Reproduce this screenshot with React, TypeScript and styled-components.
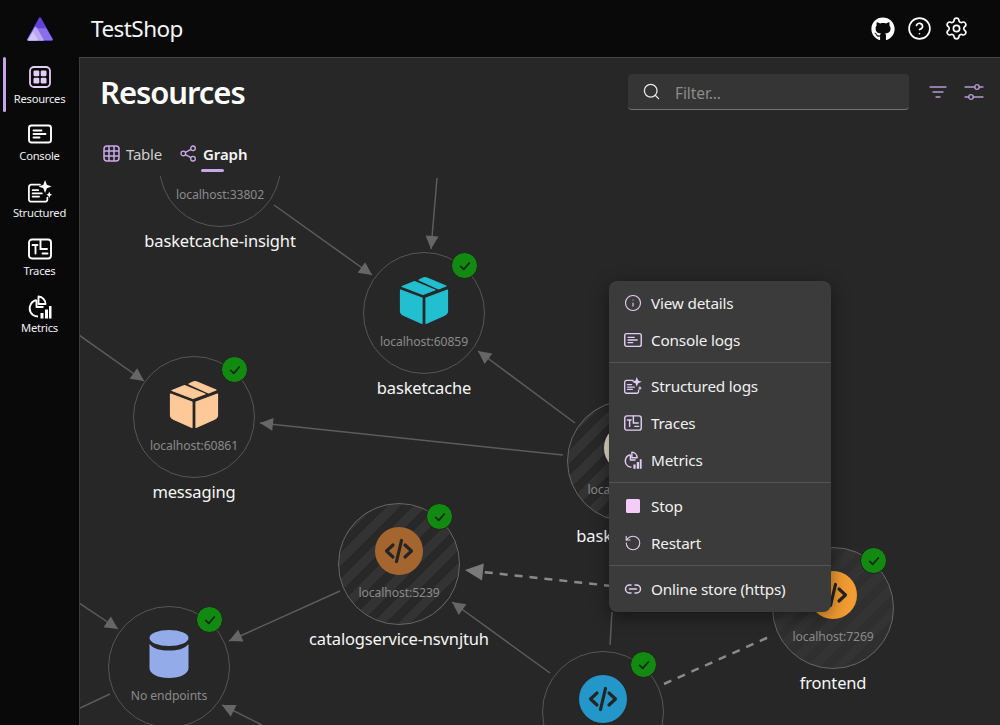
import React from "react";
import styled, { createGlobalStyle } from "styled-components";
import { FaGithub } from "react-icons/fa";
import { CircleHelp, Settings, Search, Info, RotateCcw } from "lucide-react";

const Global = createGlobalStyle`
  html, body { margin: 0; padding: 0; height: 100%; background: #090909; }
  #root { height: 100%; }
  * { box-sizing: border-box; }
  body { font-family: "Noto Sans", "Open Sans", sans-serif; color: #fff; }
`;

const Shell = styled.div`
  width: 1000px; height: 725px; overflow: hidden;
  display: grid; grid-template-columns: 79px 1fr; grid-template-rows: 57px 1fr;
  background: #090909;
`;
const TopBar = styled.header`
  grid-column: 1 / 3; display: flex; align-items: center;
  padding: 0 31px 0 26px;
`;
const AppName = styled.div`
  margin-left: 37px; font-size: 22.5px; letter-spacing: -0.55px; color: #f6f6f6; flex: 1; line-height: 30px;
`;
const TopIcons = styled.div`
  display: flex; align-items: center; gap: 12px; color: #fff;
`;
const Rail = styled.nav`
  display: flex; flex-direction: column; position: relative;
`;
const RailItem = styled.div`
  height: 57.4px; display: flex; flex-direction: column; align-items: center;
  padding-top: 8px; font-size: 11.2px; line-height: 15px; color: #efefef; letter-spacing: -0.25px; position: relative;
  svg { display: block; margin-bottom: 1.5px; }
`;
const ActiveBar = styled.span`
  position: absolute; left: 3px; top: 0; width: 3px; height: 55px; border-radius: 2px; background: #c7a6e8;
`;
const Panel = styled.main`
  background: #272727; border-top: 1px solid #474747; border-left: 1px solid #3c3c3c;
  display: flex; flex-direction: column; overflow: hidden; min-height: 0; position: relative;
`;
const PageHead = styled.div`
  display: flex; align-items: center; height: 68px; padding: 0 16px 0 20px;
`;
const Title = styled.h1`
  margin: 0; flex: 1; font-size: 31px; font-weight: 600; line-height: 44px; letter-spacing: -1.05px; color: #fff;
`;
const FilterBox = styled.div`
  width: 281px; height: 36px; background: #353535; border-radius: 4px; border-bottom: 1.5px solid #747474;
  display: flex; align-items: center; padding-left: 14px; gap: 14px; color: #e8e8e8;
  font-size: 15.5px; margin-right: 20px;
`;
const Placeholder = styled.span`
  color: #8b8b8b; letter-spacing: -0.1px; padding-top: 2px;
`;
const HeadTools = styled.div`
  display: flex; align-items: center; gap: 17px;
`;
const TabRow = styled.div`
  display: flex; align-items: center; height: 50px; padding: 5px 0 0 23px; gap: 18px;
`;
const Tab = styled.div<{ $active?: boolean }>`
  position: relative; display: flex; align-items: center; gap: 6px; height: 30px;
  font-size: 15px; letter-spacing: ${(p) => (p.$active ? "-0.05px" : "-0.25px")}; color: ${(p) => (p.$active ? "#f5f5f5" : "#cfcfcf")};
  font-weight: ${(p) => (p.$active ? 600 : 400)};
`;
const TabLine = styled.span`
  position: absolute; left: 21px; bottom: -3px; width: 23px; height: 3px; border-radius: 2px; background: #c9a6ea;
`;
const Canvas = styled.section`
  position: relative; flex: 1; overflow: hidden; min-height: 0;
`;
const Edges = styled.svg`
  position: absolute; left: 0; top: 0;
`;
const Node = styled.div<{ $x: number; $y: number }>`
  position: absolute; left: ${(p) => p.$x - 61 - 80}px; top: ${(p) => p.$y - 61 - 176}px; width: 122px;
  display: flex; flex-direction: column; align-items: center;
`;
type Fill = "plain" | "striped" | "faint";
const fills: Record<Fill, string> = {
  plain: "background: #272727;",
  striped: "background: repeating-linear-gradient(135deg, #333 0 9px, #282828 9px 18px);",
  faint: "background: repeating-linear-gradient(135deg, #333 0 9px, #2f2f2f 9px 18px);",
};
const Ring = styled.div<{ $fill: Fill }>`
  position: relative; width: 122px; height: 122px; border-radius: 50%;
  border: 1.5px solid ${(p) => (p.$fill === "plain" ? "#565656" : "#666")};
  display: flex; flex-direction: column; align-items: center; padding-top: 23px;
  ${(p) => fills[p.$fill]}
`;
const IconSlot = styled.div`
  height: 48px; width: 60px; display: flex; align-items: center; justify-content: center;
`;
const Endpoint = styled.div`
  margin-top: 10px; font-size: 12.2px; line-height: 16px; color: #8a8a8a; letter-spacing: -0.1px; white-space: nowrap;
`;
const NodeName = styled.div`
  margin-top: 2px; font-size: 16.5px; line-height: 24px; color: #f6f6f6; letter-spacing: -0.15px; white-space: nowrap;
`;
const Badge = styled.span`
  position: absolute; left: 87px; top: -1px; width: 27px; height: 27px; border-radius: 50%;
  background: #128a12; border: 1px solid #202020; display: flex; align-items: center; justify-content: center;
`;
const CodeDisc = styled.div<{ $color: string }>`
  width: 48px; height: 48px; border-radius: 50%; background: ${(p) => p.$color}; flex: none;
  display: flex; align-items: center; justify-content: center;
`;
const Menu = styled.div`
  position: absolute; left: 529px; top: 105px; width: 222px; height: 331px; background: #3b3b3b;
  border-radius: 8px; padding: 3px 0; box-shadow: 0 4px 18px rgba(0, 0, 0, 0.45);
`;
const MenuItem = styled.div`
  height: 37px; display: flex; align-items: center; gap: 9px; padding-left: 15px;
  font-size: 15.3px; letter-spacing: -0.2px; color: #f0f0f0;
  svg { flex: none; }
`;
const MenuRule = styled.div`
  height: 1px; margin: 4px 0; background: #535353;
`;

const lilac = "#e3cdf6";

const CheckMark = () => (
  <svg width="12" height="12" viewBox="0 0 14 14" fill="none" stroke="#132a13" strokeWidth="2" strokeLinecap="round" strokeLinejoin="round">
    <path d="M2 7.500 5.500 11 12 3.500" />
  </svg>
);
const CodeIcon = ({ size = 32 }: { size?: number }) => (
  <svg width={size} height={size} viewBox="0 0 32 32" fill="none" stroke="#242424" strokeWidth="3.200" strokeLinecap="round" strokeLinejoin="round">
    <path d="M10 10 3.500 16 10 22M22 10l6.500 6L22 22M18.500 5.500 13.500 26.500" />
  </svg>
);
const BoxIcon = ({ color }: { color: string }) => (
  <svg width="52" height="50" viewBox="-25 -25 50 50" fill={color} stroke={color} strokeWidth="1.200" strokeLinejoin="round">
    <path d="M-23.500-10-2-2V23.500L-20 15.500Q-23.500 14-23.500 11Z" />
    <path d="M2-2 23.500-10V11Q23.500 14 20 15.500L2 23.500Z" />
    <path d="M-22-13.500-9.500-18.500 11-10-1-5.500Z" />
    <path d="M-5-20-1-22Q1-23 3-22L22-14 14.500-11Z" />
  </svg>
);
const DbIcon = () => (
  <svg width="42" height="50" viewBox="0 0 42 50" fill="#94abea">
    <ellipse cx="21" cy="9" rx="19.500" ry="8" />
    <path d="M1.500 15C6 20 12 21.500 21 21.500S36 20 40.500 15V39C40.500 45 32 49 21 49S1.500 45 1.500 39Z" />
  </svg>
);
const ResourcesIcon = ({ color = "#e3cdf6" }: { color?: string }) => (
  <svg width="24" height="24" viewBox="-1 -1 24 24" fill="none">
    <rect x="1" y="1" width="20" height="20" rx="4" stroke={color} strokeWidth="1.800" />
    <rect x="4.500" y="4.500" width="5.800" height="5.800" rx="1.300" fill={color} />
    <rect x="11.700" y="4.500" width="5.800" height="5.800" rx="1.300" fill={color} />
    <rect x="4.500" y="11.700" width="5.800" height="5.800" rx="1.300" fill={color} />
    <rect x="11.700" y="11.700" width="5.800" height="5.800" rx="1.300" fill={color} />
  </svg>
);
const ConsoleIcon = ({ size = 24, color = "#fff" }: { size?: number; color?: string }) => (
  <svg width={size} height={size} viewBox="0 0 24 24" fill="none" stroke={color} strokeWidth="1.900" strokeLinecap="round">
    <rect x="1" y="3.500" width="22" height="17" rx="2.500" />
    <path d="M5.500 8.500h8M5.500 12h12M5.500 15.500h6" />
  </svg>
);
const StructuredIcon = ({ size = 26, color = "#fff" }: { size?: number; color?: string }) => (
  <svg width={size} height={size} viewBox="0 0 26 26" fill="none" stroke={color} strokeWidth="1.900" strokeLinecap="round">
    <path d="M13 5H3.500A2.500 2.500 0 0 0 1 7.500V21a2.500 2.500 0 0 0 2.500 2.500h15A2.500 2.500 0 0 0 21 21v-2" />
    <path d="M5 11h6M5 14.500h10M5 18h7" />
    <path d="M18.500 0l1.900 5.100L25.500 7l-5.100 1.900L18.500 14l-1.900-5.100L11.500 7l5.100-1.900Z" fill={color} stroke="none" />
    <path d="M23 12.500l1 2.500 2 1-2 1-1 2.500-1-2.500-2-1 2-1Z" fill={color} stroke="none" />
  </svg>
);
const TracesIcon = ({ size = 24, color = "#fff" }: { size?: number; color?: string }) => (
  <svg width={size} height={size} viewBox="0 0 24 24" fill="none" stroke={color} strokeWidth="1.900" strokeLinecap="round">
    <rect x="1" y="2.500" width="22" height="19" rx="3" />
    <path d="M4.500 8h5M7.500 8v8.500M12.500 3v9h6.500M14.500 16.500h5" />
  </svg>
);
const MetricsIcon = ({ size = 24, color = "#fff" }: { size?: number; color?: string }) => (
  <svg width={size} height={size} viewBox="0 0 24 24" fill="none" stroke={color} strokeWidth="1.900" strokeLinejoin="round">
    <path d="M8.500 5A8.500 8.500 0 0 0 5 20c1.500 1 3 1.500 5 1.500" />
    <path d="M10.500 1.500a7.500 7.500 0 0 1 7 7.500h-7Z" />
    <path d="M8.500 5v7h7" />
    <path d="M12.500 18h3v5.500h-3zM17 14.500h3v9h-3zM21 11h2.500v12.500H21z" fill={color} stroke="none" />
  </svg>
);
const LinkIcon = () => (
  <svg width="18" height="18" viewBox="0 0 18 18" fill="none" stroke={lilac} strokeWidth="1.500" strokeLinecap="round">
    <path d="M7 5H5.500a4 4 0 0 0 0 8H7M11 5h1.500a4 4 0 0 1 0 8H11M5.500 9h7" />
  </svg>
);
const TableIcon = () => (
  <svg width="17" height="17" viewBox="0 0 17 17" fill="none" stroke="#cba9ec" strokeWidth="1.500">
    <rect x="1" y="1" width="15" height="15" rx="3" />
    <path d="M6 1v15M11 1v15M1 6h15M1 11h15" />
  </svg>
);
const GraphIcon = () => (
  <svg width="17" height="17" viewBox="0 0 17 17" fill="none" stroke="#cba9ec" strokeWidth="1.300">
    <circle cx="3.300" cy="8.500" r="2.300" />
    <circle cx="13" cy="3.300" r="2.300" />
    <circle cx="13" cy="13.700" r="2.300" />
    <path d="M5.400 7.400 10.900 4.400M5.400 9.600 10.900 12.600" />
  </svg>
);
const FilterLines = () => (
  <svg width="18" height="14" viewBox="0 0 18 14" fill="none" stroke="#b79ad6" strokeWidth="1.300" strokeLinecap="round">
    <path d="M1 2h16M4 7h10M7 12h4" />
  </svg>
);
const SlidersIcon = () => (
  <svg width="20" height="18" viewBox="0 0 20 18" fill="none" stroke="#b79ad6" strokeWidth="1.300" strokeLinecap="round">
    <path d="M1 4h10M15 4h4M1 14h4M9 14h10" />
    <circle cx="13" cy="4" r="2.300" />
    <circle cx="7" cy="14" r="2.300" />
  </svg>
);
const Logo = () => (
  <svg width="28" height="26" viewBox="0 0 28 26" strokeLinejoin="round" strokeWidth="2.400">
    <path d="M14 2.500 25.800 23.500H2.200Z" fill="#6045d8" stroke="#6045d8" />
    <path d="M8.500 13H19.500L25.800 23.500H14.500Z" fill="#8a6eea" stroke="#8a6eea" strokeWidth="1.500" />
    <path d="M9.500 11.500 13 17 17 24H2.200Z" fill="#bba8f3" stroke="#bba8f3" strokeWidth="1.500" />
    <path d="M7 16.500 11.500 24H2.700Z" fill="#d2c4f8" stroke="#d2c4f8" strokeWidth="1" />
  </svg>
);

type Seg = { from: [number, number]; to: [number, number]; dashed?: boolean; big?: boolean; arrow?: boolean };
const segs: Seg[] = [
  { from: [274, 205], to: [372, 275], arrow: true },
  { from: [437, 178], to: [431, 249], arrow: true },
  { from: [79, 335], to: [144, 381], arrow: true },
  { from: [563, 455], to: [260, 423], arrow: true },
  { from: [575, 423], to: [478, 351], arrow: true },
  { from: [340, 591], to: [229, 641], arrow: true },
  { from: [612, 586], to: [465, 570], dashed: true, big: true, arrow: true },
  { from: [550, 673], to: [452, 602], arrow: true },
  { from: [612, 612], to: [610, 645] },
  { from: [664, 684], to: [771, 636], dashed: true },
  { from: [79, 603], to: [118, 629], arrow: true },
  { from: [80, 708], to: [110, 694] },
  { from: [262, 725], to: [222, 705], arrow: true },
];
const arrowPoints = ({ from, to, big }: Seg) => {
  const dx = to[0] - from[0], dy = to[1] - from[1];
  const l = Math.hypot(dx, dy), ux = dx / l, uy = dy / l;
  const len = big ? 18 : 13, half = big ? 8.5 : 6.5;
  const bx = to[0] - ux * len, by = to[1] - uy * len;
  return `${to[0]},${to[1]} ${bx - uy * half},${by + ux * half} ${bx + uy * half},${by - ux * half}`;
};

type NodeData = {
  x: number; y: number; name?: string; endpoint?: string; fill?: Fill;
  icon?: React.ReactNode;
};
const nodes: NodeData[] = [
  { x: 220, y: 166, name: "basketcache-insight", endpoint: "localhost:33802" },
  { x: 424, y: 313, name: "basketcache", endpoint: "localhost:60859", icon: <BoxIcon color="#21bfcf" /> },
  { x: 194, y: 417, name: "messaging", endpoint: "localhost:60861", icon: <BoxIcon color="#fdc999" /> },
  { x: 628, y: 461, name: "basketservice", endpoint: "localhost:5221", fill: "striped", icon: <CodeDisc $color="#e6e0d0"><CodeIcon /></CodeDisc> },
  { x: 399, y: 564, name: "catalogservice-nsvnjtuh", endpoint: "localhost:5239", fill: "striped", icon: <CodeDisc $color="#a5652f"><CodeIcon /></CodeDisc> },
  { x: 169, y: 667, endpoint: "No endpoints", icon: <DbIcon /> },
  { x: 833, y: 608, name: "frontend", endpoint: "localhost:7269", fill: "faint", icon: <CodeDisc $color="#f39c32"><CodeIcon /></CodeDisc> },
  { x: 603, y: 712, icon: <CodeDisc $color="#2397c9"><CodeIcon /></CodeDisc> },
];

const rail = [
  { label: "Resources", icon: <ResourcesIcon />, active: true },
  { label: "Console", icon: <ConsoleIcon /> },
  { label: "Structured", icon: <StructuredIcon size={24} /> },
  { label: "Traces", icon: <TracesIcon /> },
  { label: "Metrics", icon: <MetricsIcon /> },
];

export default function App() {
  return (
    <Shell>
      <Global />
      <TopBar>
        <Logo />
        <AppName>TestShop</AppName>
        <TopIcons>
          <FaGithub size={24} />
          <CircleHelp size={25} strokeWidth={1.6} />
          <Settings size={25} strokeWidth={1.6} />
        </TopIcons>
      </TopBar>
      <Rail>
        {rail.map((r) => (
          <RailItem key={r.label}>
            {r.active && <ActiveBar />}
            {r.icon}
            {r.label}
          </RailItem>
        ))}
      </Rail>
      <Panel>
        <PageHead>
          <Title>Resources</Title>
          <FilterBox>
            <Search size={19} strokeWidth={1.6} />
            <Placeholder>Filter...</Placeholder>
          </FilterBox>
          <HeadTools>
            <FilterLines />
            <SlidersIcon />
          </HeadTools>
        </PageHead>
        <TabRow>
          <Tab><TableIcon />Table</Tab>
          <Tab $active><GraphIcon />Graph<TabLine /></Tab>
        </TabRow>
        <Canvas>
          <Edges width="920" height="550" viewBox="80 176 920 550">
            {segs.map((s, i) => (
              <g key={i}>
                <line x1={s.from[0]} y1={s.from[1]} x2={s.to[0]} y2={s.to[1]} stroke={s.dashed ? "#8a8a8a" : "#5c5c5c"} strokeWidth={s.dashed ? 2.5 : 1.5} strokeDasharray={s.dashed ? "8 7" : undefined} />
                {s.arrow && <polygon points={arrowPoints(s)} fill={s.big ? "#7a7a7a" : "#666"} />}
              </g>
            ))}
          </Edges>
          {nodes.map((n) => (
            <Node key={`${n.x}-${n.y}`} $x={n.x} $y={n.y}>
              <Ring $fill={n.fill ?? "plain"}>
                <IconSlot>{n.icon}</IconSlot>
                {n.endpoint && <Endpoint>{n.endpoint}</Endpoint>}
                <Badge><CheckMark /></Badge>
              </Ring>
              {n.name && <NodeName>{n.name}</NodeName>}
            </Node>
          ))}
          <Menu>
            <MenuItem><Info size={18} color={lilac} strokeWidth={1.5} />View details</MenuItem>
            <MenuItem><ConsoleIcon size={18} color={lilac} />Console logs</MenuItem>
            <MenuRule />
            <MenuItem><StructuredIcon size={18} color={lilac} />Structured logs</MenuItem>
            <MenuItem><TracesIcon size={18} color={lilac} />Traces</MenuItem>
            <MenuItem><MetricsIcon size={18} color={lilac} />Metrics</MenuItem>
            <MenuRule />
            <MenuItem>
              <svg width="18" height="18" viewBox="0 0 18 18"><rect x="2" y="2" width="14" height="14" rx="1.500" fill="#f3cdf8" /></svg>
              Stop
            </MenuItem>
            <MenuItem><RotateCcw size={18} color={lilac} strokeWidth={1.5} />Restart</MenuItem>
            <MenuRule />
            <MenuItem><LinkIcon />Online store (https)</MenuItem>
          </Menu>
        </Canvas>
      </Panel>
    </Shell>
  );
}
